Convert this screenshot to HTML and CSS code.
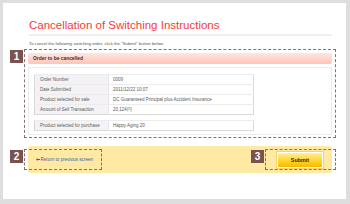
FILE: index.html
```html
<!DOCTYPE html>
<html lang="en">
<head>
	<meta charset="UTF-8">
	<title>Cancellation of Switching Instructions</title>
	<link rel="stylesheet" href="styles.css">
</head>
<body>
	<div class="panel">
		<h1 class="title">Cancellation of Switching Instructions</h1>
		<p class="lead">To cancel the following switching order, click the "Submit" button below.</p>

		<div class="step step-main">
			<span class="badge">1</span>
			<div class="frame frame-main">
				<h2 class="bar">Order to be cancelled</h2>
				<div class="box">
					<table class="info">
						<tr><td class="label">Order Number</td><td>0009</td></tr>
						<tr><td class="label">Date Submitted</td><td>2011/12/22 10:07</td></tr>
						<tr><td class="label">Product selected for sale</td><td>DC Guaranteed Principal plus Accident Insurance</td></tr>
						<tr><td class="label">Amount of Sell Transaction</td><td>20,124円</td></tr>
					</table>
					<table class="info info-buy">
						<tr><td class="label">Product selected for purchase</td><td>Happy Aging 20</td></tr>
					</table>
				</div>
			</div>
		</div>

		<div class="actions">
			<div class="step step-back">
				<span class="badge">2</span>
				<div class="frame frame-back">
					<a href="javascript:;" class="back"><svg class="arrow" width="4" height="3" viewBox="0 0 4 3"><path d="M0 1.5 L1.6 0 V3 Z M1.4 1.1 H4 V1.9 H1.4 Z" fill="#e8262a"/></svg>Return to previous screen</a>
				</div>
			</div>
			<div class="step step-submit">
				<span class="badge">3</span>
				<div class="frame frame-submit">
					<button class="submit" type="button">Submit</button>
				</div>
			</div>
		</div>
	</div>
</body>
</html>
```

FILE: styles.css
```css
* {
	box-sizing: border-box;
}
html,
body {
	margin: 0;
}
body {
	width: 350px;
	height: 204px;
	overflow: hidden;
	padding: 3px 4px 5px 3px;
	background: #dedede;
	font-family: "Liberation Sans", Arial, sans-serif;
}
.panel {
	height: 196px;
	padding: 16px 10px 0 7px;
	background: #fff;
}
.title {
	margin: 0 4px 0 19px;
	padding-bottom: 2px;
	border-bottom: 2px solid #f0f0f0;
	font-size: 11.5px;
	line-height: 13px;
	font-weight: normal;
	color: #f43c3c;
}
.lead {
	margin: 5px 0 0 19px;
	font-size: 4.3px;
	line-height: 6px;
	color: #555;
}

.step {
	display: flex;
	align-items: flex-start;
}
.step-main {
	margin-top: 2px;
}
.badge {
	flex: none;
	width: 13px;
	height: 13px;
	margin: 1px 1px 0 0;
	background: #7a5350;
	color: #fff;
	font-size: 10px;
	font-weight: bold;
	line-height: 13px;
	text-align: center;
}
.frame {
	border: 1px dashed #8b716c;
}
.frame-main {
	flex: 1;
	padding: 3px 3px 2px 3px;
}
.bar {
	margin: 0;
	height: 11px;
	padding-left: 5px;
	border-radius: 2px;
	background: linear-gradient(#ffe6e0, #ffc5b7);
	color: #3a3030;
	font-size: 4.9px;
	font-weight: bold;
	line-height: 11px;
}
.box {
	margin-top: 3px;
	padding: 6px 5px 3px;
	border: 1px solid #ececec;
}
.info {
	width: 220px;
	border-collapse: collapse;
	border: 1px solid #d9d9d9;
	font-size: 4.5px;
	color: #5a5a5a;
}
.info td {
	height: 10px;
	padding: 0 0 0 4px;
	border-top: 1px solid #ececec;
	white-space: nowrap;
}
.info .label {
	width: 74px;
	padding-left: 5px;
	background: #f4f2f5;
	border-right: 1px solid #e6e6e6;
}
.info-buy {
	margin-top: 5px;
}

.actions {
	display: flex;
	justify-content: space-between;
	align-items: center;
	height: 27px;
	margin: 8px 4px 0 18px;
	border-radius: 3px;
	background: #ffe9a3;
}
.step-back {
	margin-left: -18px;
}
.step-submit {
	margin-right: -4px;
}
.frame-back {
	display: flex;
	align-items: center;
	width: 78px;
	height: 21px;
	padding-left: 11px;
}
.back {
	display: flex;
	align-items: center;
	color: #3c5fae;
	font-size: 4.6px;
	text-decoration: none;
}
.arrow {
	margin-right: 0.5px;
}
.frame-submit {
	width: 71px;
	height: 21px;
	padding: 2px 0 0 11px;
}
.submit {
	display: block;
	width: 46px;
	height: 16px;
	padding: 0;
	border: 1px solid #fff;
	box-shadow: 0 0 0 1px #f3d27c;
	background: linear-gradient(#fff09c, #ffd52a 55%, #f7b900);
	color: #3a2a00;
	font-family: "Liberation Sans", Arial, sans-serif;
	font-size: 5.4px;
	font-weight: bold;
}
```
